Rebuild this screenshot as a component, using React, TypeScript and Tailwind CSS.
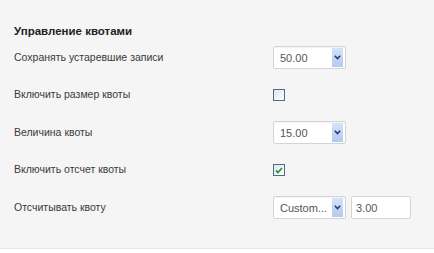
import React from "react";

const font = { fontFamily: '"Liberation Sans", Arial, sans-serif' };

function Select({ value }: { value: string }) {
  return (
    <div className="flex h-[23px] w-[73px] items-center rounded-[2px] border border-[#d4d4d4] bg-white pl-[6px] pr-[2px] shadow-[inset_0_1px_1px_rgba(0,0,0,0.04)]">
      <span className="flex-1 text-[11px] text-[#555]">{value}</span>
      <div className="flex h-[19px] w-[11px] items-center justify-center bg-gradient-to-b from-[#d6e3fa] to-[#b3c9f0]">
        <svg width="7" height="5" viewBox="0 0 7 5">
          <path d="M0.8 0.8 L3.5 3.6 L6.2 0.8" fill="none" stroke="#1f3f7a" strokeWidth="1.6" />
        </svg>
      </div>
    </div>
  );
}

function Checkbox({ checked }: { checked?: boolean }) {
  return (
    <div className="flex h-[12px] w-[12px] items-center justify-center border border-[#4d6d8f] bg-gradient-to-br from-[#dfe5ec] to-white">
      {checked && (
        <svg width="8" height="7" viewBox="0 0 8 7">
          <path d="M1 3.5 L3 5.5 L7 1" fill="none" stroke="#2e9a2e" strokeWidth="1.8" />
        </svg>
      )}
    </div>
  );
}

function Row({ label, children }: { label: string; children: React.ReactNode }) {
  return (
    <div className="flex h-[37.5px] items-center">
      <div className="w-[259px] text-[10.5px] text-[#3a3a3a]">{label}</div>
      <div className="flex items-center gap-[5px]">{children}</div>
    </div>
  );
}

export default function App() {
  return (
    <div className="flex h-[253px] w-[434px] flex-col bg-white" style={font}>
      <div className="flex flex-1 flex-col border-b border-[#e6e6e6] bg-[#f5f5f5] pl-[14px] pt-[24px]">
        <div className="flex h-[15px] items-center text-[11.5px] font-bold text-[#222]">Управление квотами</div>
        <Row label="Сохранять устаревшие записи">
          <Select value="50.00" />
        </Row>
        <Row label="Включить размер квоты">
          <Checkbox />
        </Row>
        <Row label="Величина квоты">
          <Select value="15.00" />
        </Row>
        <Row label="Включить отсчет квоты">
          <Checkbox checked />
        </Row>
        <Row label="Отсчитывать квоту">
          <Select value="Custom..." />
          <div className="flex h-[23px] w-[60px] items-center rounded-[2px] border border-[#d4d4d4] bg-white pl-[4px] text-[11px] text-[#555]">
            3.00
          </div>
        </Row>
      </div>
      <div className="h-[4px] bg-white" />
    </div>
  );
}
